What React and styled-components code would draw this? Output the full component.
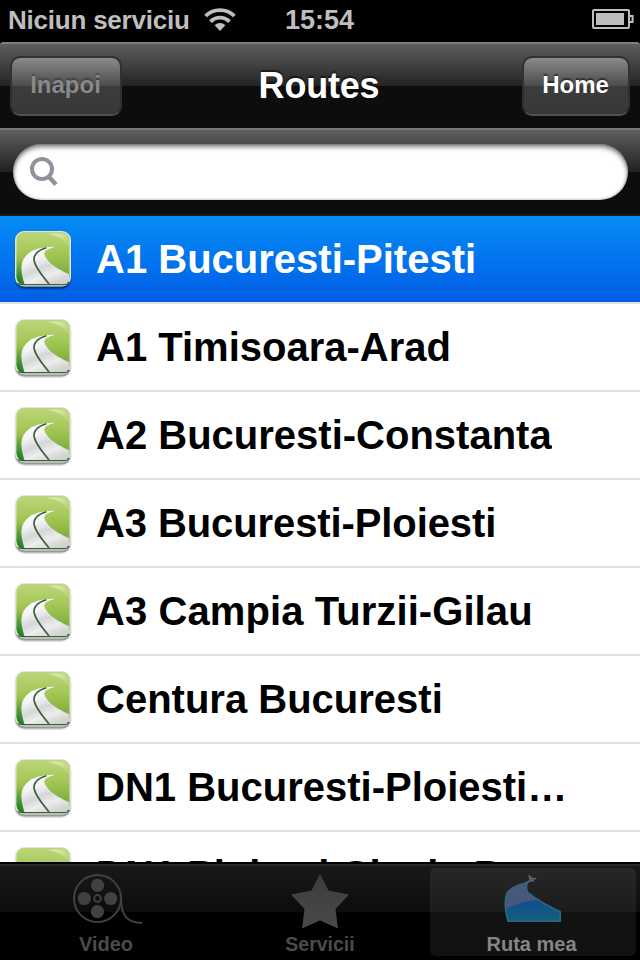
import React from "react";
import styled, { createGlobalStyle } from "styled-components";

const routes = [
  { name: "A1 Bucuresti-Pitesti" },
  { name: "A1 Timisoara-Arad" },
  { name: "A2 Bucuresti-Constanta" },
  { name: "A3 Bucuresti-Ploiesti", spacing: -0.1 },
  { name: "A3 Campia Turzii-Gilau", spacing: 0.08 },
  { name: "Centura Bucuresti" },
  { name: "DN1 Bucuresti-Ploiesti-Nord" },
  { name: "DN1 Ploiesti-Sinaia-Brasov" },
];

function WifiIcon() {
  return (
    <svg width="32" height="24" viewBox="0 0 32 24">
      <g fill="none" stroke="#bebebe" strokeWidth="3.8">
        <path d="M1.6 8 A20.5 20.5 0 0 1 30.4 8" />
        <path d="M6.5 13.6 A13.2 13.2 0 0 1 25.5 13.6" />
      </g>
      <path d="M10.6 17.3 A7.6 7.6 0 0 1 21.4 17.3 L16 23 Z" fill="#bebebe" />
    </svg>
  );
}

function BatteryIcon() {
  return (
    <svg width="42" height="20" viewBox="0 0 42 20">
      <rect x="1" y="1" width="36" height="18" rx="1" fill="none" stroke="#bebebe" strokeWidth="2" />
      <rect x="4" y="4" width="28" height="12" fill="#bebebe" />
      <path d="M38 7h2.6v6H38" fill="none" stroke="#bebebe" strokeWidth="2" />
    </svg>
  );
}

function SearchIcon() {
  return (
    <svg width="30" height="32" viewBox="0 0 30 32" fill="none" stroke="#8e939b">
      <circle cx="13" cy="13" r="10" strokeWidth="4" />
      <path d="M19.500 20.500 L27 28.500" strokeWidth="4.4" />
    </svg>
  );
}

function RouteIcon() {
  return (
    <svg width="60" height="62" viewBox="0 0 60 62">
      <defs>
        <linearGradient id="grass" x1="0" y1="0" x2="0" y2="1">
          <stop offset="0" stopColor="#bcd57c" />
          <stop offset="0.35" stopColor="#a6c95a" />
          <stop offset="0.65" stopColor="#8cb845" />
          <stop offset="1" stopColor="#5a9c3c" />
        </linearGradient>
        <radialGradient id="corner" cx="0" cy="1" r="0.5">
          <stop offset="0" stopColor="#1f7a2c" />
          <stop offset="1" stopColor="#1f7a2c" stopOpacity="0" />
        </radialGradient>
        <linearGradient id="road" x1="0.2" y1="0" x2="0.7" y2="1">
          <stop offset="0" stopColor="#ffffff" />
          <stop offset="0.3" stopColor="#f4f4f4" />
          <stop offset="0.55" stopColor="#d6d7d9" />
          <stop offset="0.75" stopColor="#ededee" />
          <stop offset="1" stopColor="#d2d2d4" />
        </linearGradient>
        <linearGradient id="gloss" x1="0" y1="0" x2="1" y2="0.6">
          <stop offset="0" stopColor="#f2f8d8" />
          <stop offset="1" stopColor="#cfe19b" stopOpacity="0.5" />
        </linearGradient>
      </defs>
      <rect x="1.5" y="4" width="57" height="57" rx="10" fill="#000" opacity="0.12" />
      <rect x="2" y="3" width="56" height="56.5" rx="9.5" fill="#000" opacity="0.32" />
      <rect x="2" y="2" width="56" height="55.5" rx="9" fill="#dfe8cf" />
      <rect x="3.500" y="3" width="53" height="53" rx="8" fill="url(#grass)" />
      <rect x="3.500" y="3" width="53" height="53" rx="8" fill="url(#corner)" />
      <path d="M34 4.500H49Q55.500 5 55.500 12V18Q52 9 34 4.500z" fill="url(#gloss)" opacity="0.75" />
      <path
        d="M11.500 55C8 44 7 36 11 29.500C16 22 24 19 32 18.500Q37 17.500 42 18C35 19.500 30.500 22 31.500 26C35 34.500 46 41 56 45V51Q55.500 55 51 55z"
        fill="url(#road)"
      />
      <path
        d="M33.500 18.800C25 21 20 26 21.200 32C23 40 29.500 46.500 36 55"
        fill="none"
        stroke="#3d5f39"
        strokeWidth="1.700"
      />
      <path d="M5 54.500q2 1.200 5 1.200h41q3.500 0 5-3" fill="none" stroke="#3d5f39" strokeWidth="1.200" />
    </svg>
  );
}

function ReelIcon() {
  return (
    <svg width="70" height="52" viewBox="0 0 70 52">
      <circle cx="25.500" cy="24.500" r="23.500" fill="none" stroke="#414141" strokeWidth="2" />
      <g fill="#414141">
        <circle cx="25.500" cy="11.300" r="6.600" />
        <circle cx="12.300" cy="24.500" r="6.600" />
        <circle cx="38.700" cy="24.500" r="6.600" />
        <circle cx="25.500" cy="37.700" r="6.600" />
      </g>
      <circle cx="25.500" cy="24.500" r="3.400" fill="none" stroke="#414141" strokeWidth="2" />
      <path d="M49 24.500C49 41 55 49 70 49" fill="none" stroke="#414141" strokeWidth="2" />
    </svg>
  );
}

function StarIcon() {
  return (
    <svg width="58" height="56" viewBox="0 0 58 56">
      <defs>
        <linearGradient id="star" x1="0" y1="0" x2="0" y2="1">
          <stop offset="0" stopColor="#3c3c3c" />
          <stop offset="1" stopColor="#4a4a4a" />
        </linearGradient>
      </defs>
      <path
        d="M29 0L37.500 16.500L58 20.500L44.500 35L47 54.500L29 46.500L11 54.500L13.500 35L0 20.500L20.500 16.500Z"
        fill="url(#star)"
      />
    </svg>
  );
}

function RoadIcon() {
  return (
    <svg width="58" height="50" viewBox="0 0 58 50">
      <defs>
        <linearGradient id="water" x1="0" y1="0" x2="0" y2="1">
          <stop offset="0" stopColor="#15437f" />
          <stop offset="0.6" stopColor="#12518f" />
          <stop offset="1" stopColor="#136078" />
        </linearGradient>
      </defs>
      <path
        d="M4 48C1 39 0 27 3 20C7 14 16 11 25 8L27 5L24 8C22 12 22 15 24 18C33 26 44 31 57 37.500V48z"
        fill="url(#water)"
      />
      <path
        d="M1.500 35C0.500 28 0.500 22 4 18C9 13 17 10 23 8.500C21 12 22 16 24 18L34 26C22 27 11 30 1.500 35z"
        fill="#46587c"
      />
      <path
        d="M23.500 8.500C15 10.500 7 13.500 3 19C0 26 1.500 38 4 47.200H56.300V38C44 32 33 26 24 18.500C22 15 22 12 23.500 8.500z"
        fill="none"
        stroke="#2f6880"
        strokeWidth="1.500"
      />
      <path
        d="M22 9L26.500 6.500L25.500 2.500L28.500 5L32 4.500M26.500 6.500L30 7"
        fill="none"
        stroke="#59666f"
        strokeWidth="1.700"
      />
    </svg>
  );
}

const tabs = [
  { label: "Video", icon: <ReelIcon />, shift: -2 },
  { label: "Servicii", icon: <StarIcon />, size: 19.5 },
  { label: "Ruta mea", icon: <RoadIcon />, shift: -3, active: true },
];

function App() {
  return (
    <>
      <GlobalStyle />
      <Screen>
        <StatusBar>
          <Carrier>
            Niciun serviciu
            <WifiIcon />
          </Carrier>
          <Clock>15:54</Clock>
          <BatteryIcon />
        </StatusBar>
        <NavBar>
          <NavButton $width={112} disabled>
            Inapoi
          </NavButton>
          <Title>Routes</Title>
          <NavButton $width={108}>Home</NavButton>
        </NavBar>
        <SearchBar>
          <SearchField>
            <SearchIcon />
            <input type="text" aria-label="Search" />
          </SearchField>
        </SearchBar>
        <RouteList>
          {routes.map((route, index) => (
            <RouteRow key={route.name} $selected={index === 0}>
              <RouteIcon />
              <RouteName $spacing={route.spacing}>{route.name}</RouteName>
            </RouteRow>
          ))}
        </RouteList>
        <TabBar>
          {tabs.map((tab) => (
            <Tab key={tab.label} $active={tab.active}>
              <TabIcon>{tab.icon}</TabIcon>
              <TabLabel $shift={tab.shift} $size={tab.size}>
                {tab.label}
              </TabLabel>
            </Tab>
          ))}
        </TabBar>
      </Screen>
    </>
  );
}

// Styled components
const GlobalStyle = createGlobalStyle`
  * {
    box-sizing: border-box;
  }
  body {
    margin: 0;
    background-color: black;
    font-family: "Liberation Sans", Arial, sans-serif;
    font-weight: bold;
  }
  svg {
    display: block;
    flex: none;
  }
`;

const Screen = styled.div`
  width: 640px;
  height: 960px;
  display: flex;
  flex-direction: column;
  overflow: hidden;
  background-color: black;
`;

const StatusBar = styled.div`
  height: 42px;
  flex: none;
  display: grid;
  grid-template-columns: 1fr auto 1fr;
  align-items: center;
  padding: 0 6px 4px 8px;
  color: #bebebe;
  font-size: 26px;
  > svg {
    justify-self: end;
  }
`;

const Carrier = styled.div`
  display: flex;
  align-items: center;
  gap: 14px;
  padding-top: 2px;
  letter-spacing: -0.22px;
  white-space: nowrap;
`;

const Clock = styled.div`
  padding: 2px 3px 0 0;
  font-size: 27px;
`;

const NavBar = styled.div`
  height: 86px;
  flex: none;
  display: grid;
  grid-template-columns: 1fr auto 1fr;
  align-items: center;
  padding: 0 10px;
  border-top: 2px solid #7c7c7c;
  border-radius: 3px 3px 0 0;
  background: linear-gradient(#5e5e5e, #232323 42px, #0d0d0d 42px);
  > :last-child {
    justify-self: end;
  }
`;

const NavButton = styled.button`
  width: ${({ $width }) => $width}px;
  height: 60px;
  padding: 0 1px 3px 0;
  border: 2px solid #303030;
  border-bottom-color: #505050;
  border-radius: 10px;
  background: linear-gradient(#8b8b8b, #4b4b4b 28px, #3c3c3c 28px, #383838) padding-box;
  color: white;
  font: bold 24px "Liberation Sans", Arial, sans-serif;
  text-shadow: 0 -2px 1px rgba(0, 0, 0, 0.5);
  &:disabled {
    color: #898989;
    text-shadow: 0 -2px 1px rgba(0, 0, 0, 0.25);
  }
`;

const Title = styled.div`
  padding-right: 2px;
  font-size: 36px;
  letter-spacing: -0.2px;
  color: white;
  text-shadow: 0 -2px 1px rgba(0, 0, 0, 0.5);
`;

const SearchBar = styled.div`
  height: 88px;
  flex: none;
  padding: 14px 12px 0 13px;
  border-top: 2px solid #787878;
  border-bottom: 2px solid #1a1a1a;
  background: linear-gradient(#5e5e5e, #202020 42px, #0d0d0d 42px);
`;

const SearchField = styled.label`
  height: 56px;
  display: flex;
  align-items: center;
  padding: 0 24px 0 16px;
  border-radius: 28px;
  background-color: white;
  box-shadow: inset 0 3px 5px rgba(0, 0, 0, 0.5), inset 0 0 3px rgba(0, 0, 0, 0.35);
  input {
    flex: 1;
    border: none;
    outline: none;
    background: none;
    font-size: 28px;
  }
`;

const RouteList = styled.div`
  flex: 1;
  min-height: 0;
  overflow: hidden;
  background-color: white;
`;

const RouteRow = styled.div`
  height: 88px;
  display: flex;
  align-items: center;
  gap: 23px;
  padding: 2px 68px 0 13px;
  border-bottom: 2px solid #e0e0e0;
  color: ${({ $selected }) => ($selected ? "white" : "black")};
  background: ${({ $selected }) =>
    $selected ? "linear-gradient(#058cf5, #015de6)" : "white"};
`;

const RouteName = styled.div`
  margin-bottom: 2px;
  font-size: 40px;
  line-height: 48px;
  letter-spacing: ${({ $spacing = 0 }) => $spacing}px;
  white-space: nowrap;
  overflow: hidden;
  text-overflow: ellipsis;
`;

const TabBar = styled.div`
  height: 98px;
  flex: none;
  display: grid;
  grid-template-columns: repeat(3, 206px);
  justify-content: center;
  column-gap: 7px;
  padding-top: 2px;
  border-top: 2px solid black;
  background: linear-gradient(#292929 2px, #191919 2px, #0c0c0c 48px, #000 48px);
`;

const Tab = styled.div`
  height: 88px;
  margin-top: 2px;
  display: flex;
  flex-direction: column;
  align-items: center;
  border-radius: 6px;
  color: ${({ $active }) => ($active ? "#858585" : "#4b4b4b")};
  background: ${({ $active }) =>
    $active ? "linear-gradient(#272727, #1c1c1c 44px, #121212 44px)" : "none"};
`;

const TabIcon = styled.div`
  height: 67px;
  padding-top: 6px;
`;

const TabLabel = styled.div`
  margin-left: ${({ $shift = 0 }) => $shift}px;
  font-size: ${({ $size = 20 }) => $size}px;
  line-height: 24px;
`;

export default App;
